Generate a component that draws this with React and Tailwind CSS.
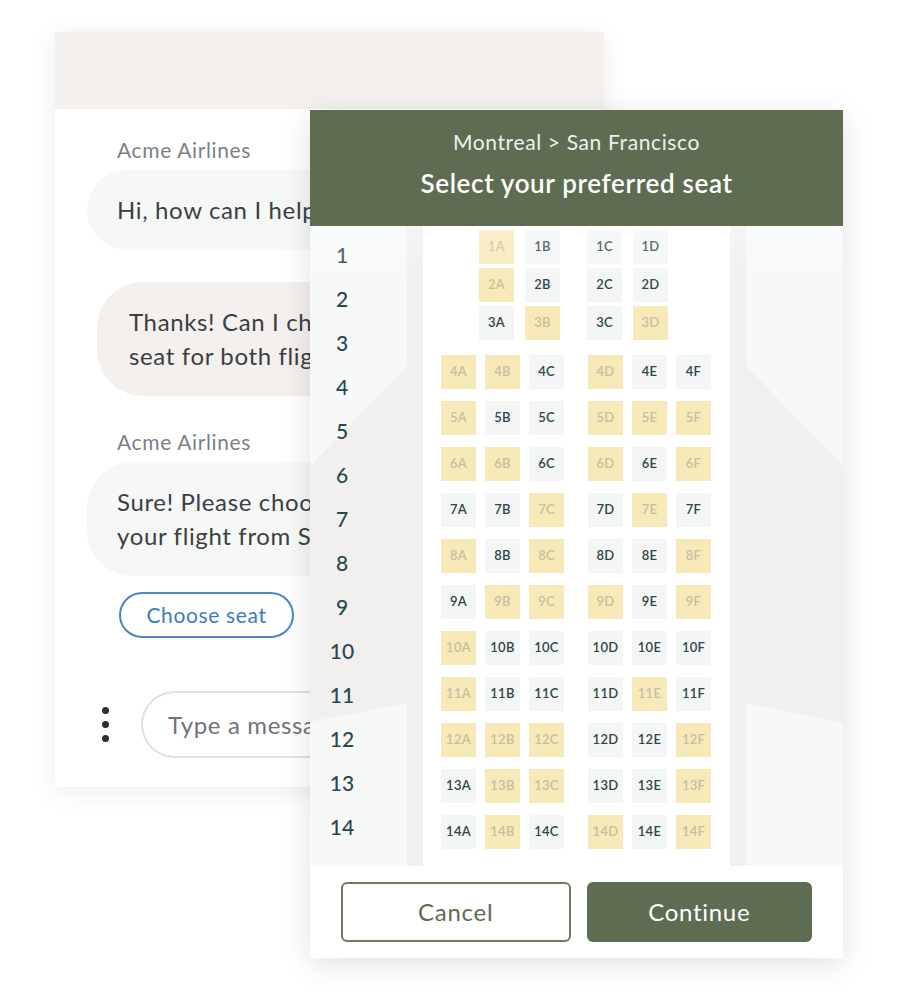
import React from 'react';

const FONT = { fontFamily: 'Lato, "Open Sans", Arial, sans-serif' };

const taken = {
  1: 'A', 2: 'A', 3: 'BD', 4: 'ABD', 5: 'ADEF', 6: 'ABDF', 7: 'CE',
  8: 'ACF', 9: 'BCDF', 10: 'A', 11: 'AE', 12: 'ABCF', 13: 'BCF', 14: 'BDF',
};

function Seat({ row, col }) {
  const isTaken = taken[row].includes(col);
  return (
    <div
      className={`w-[35px] h-[34px] flex items-center justify-center text-[13px] font-semibold tracking-[0.02em] ${
        isTaken ? 'bg-[#f7e9b8] text-[#c6bfa2]' : 'bg-[#f4f6f6] text-[#2f4548]'
      }`}
    >
      {row}{col}
    </div>
  );
}

function SideColumn({ side, children }) {
  const points = side === 'left' ? '97,140 0,240 0,496 97,477' : '0,140 97,240 97,497 0,477';
  return (
    <div className="relative w-[97px] bg-[#f7f8f8]">
      <svg className="absolute inset-0" width="97" height="640" viewBox="0 0 97 640">
        <polygon points={points} fill="#f1f0ee" />
      </svg>
      {children}
    </div>
  );
}

function SeatPanel() {
  const rows = Array.from({ length: 14 }, (_, i) => i + 1);
  return (
    <div className="absolute left-[310px] top-[110px] w-[533px] bg-white shadow-[0_6px_28px_rgba(0,0,0,0.12)]">
      {/* header */}
      <div className="h-[116px] bg-[#5e6d51] flex flex-col items-center pt-[20px]">
        <div className="text-[21px] leading-[24px] tracking-[0.03em] text-[#eef0eb]">Montreal &gt; San Francisco</div>
        <div className="mt-[14px] text-[26px] leading-[30px] font-semibold tracking-[0.025em] text-white">Select your preferred seat</div>
      </div>

      {/* seat map */}
      <div className="relative flex h-[640px]">
        <SideColumn side="left">
          <div className="relative flex flex-col pt-[7px]">
            {rows.map(r => (
              <div key={r} className="w-[64px] h-[44px] leading-[44px] text-center text-[21px] font-medium text-[#2a474d]">{r}</div>
            ))}
          </div>
        </SideColumn>
        <div className="w-[16px] bg-[#f1f0ee]" />
        <div className="w-[307px] bg-white pt-[4px]">
          <div className="flex flex-col gap-[4px] pl-[56px]">
            {[1, 2, 3].map(r => (
              <div key={r} className="flex gap-[27px]">
                <div className="flex gap-[11px]"><Seat row={r} col="A" /><Seat row={r} col="B" /></div>
                <div className="flex gap-[11px]"><Seat row={r} col="C" /><Seat row={r} col="D" /></div>
              </div>
            ))}
          </div>
          <div className="mt-[15px] flex flex-col gap-[12px] pl-[18px]">
            {rows.slice(3).map(r => (
              <div key={r} className="flex gap-[24px]">
                <div className="flex gap-[9px]"><Seat row={r} col="A" /><Seat row={r} col="B" /><Seat row={r} col="C" /></div>
                <div className="flex gap-[9px]"><Seat row={r} col="D" /><Seat row={r} col="E" /><Seat row={r} col="F" /></div>
              </div>
            ))}
          </div>
        </div>
        <div className="w-[16px] bg-[#f1f0ee]" />
        <SideColumn side="right" />
        <div className="pointer-events-none absolute top-0 left-0 right-0 h-[60px] bg-linear-to-b from-white/30 to-transparent" />
      </div>

      {/* actions */}
      <div className="flex gap-[16px] px-[31px] pt-[16px] pb-[16px]">
        <button className="flex-1 h-[60px] rounded-[6px] border-2 border-[#6d7c63] bg-white text-[24px] tracking-[0.03em] text-[#5e6d51]">Cancel</button>
        <button className="flex-1 h-[60px] rounded-[6px] bg-[#5e6d51] text-[24px] tracking-[0.03em] text-white">Continue</button>
      </div>
    </div>
  );
}

function ChatCard() {
  return (
    <div className="w-[549px] h-[755px] bg-white shadow-[0_4px_24px_rgba(0,0,0,0.08)] overflow-hidden tracking-[0.04em]">
      <div className="h-[77px] bg-[#f3f0ee]" />
      <div className="pl-[32px] pt-[29px] flex flex-col items-start">
        <div className="pl-[30px] text-[21px] leading-[24px] text-[#7c8085]">Acme Airlines</div>
        <div className="mt-[8px] w-[224px] overflow-hidden rounded-l-[40px] bg-[#f6f7f7] pl-[30px] py-[23px] text-[24px] leading-[34px] text-[#3a3f44] whitespace-nowrap">
          Hi, how can I help you today?
        </div>
        <div className="mt-[32px] ml-[10px] w-[214px] overflow-hidden rounded-l-[46px] bg-[#f3f0ee] pl-[32px] py-[23px] text-[24px] leading-[34px] text-[#3a3f44] whitespace-nowrap">
          Thanks! Can I choose my<br />seat for both flights?
        </div>
        <div className="mt-[34px] pl-[30px] text-[21px] leading-[24px] text-[#7c8085]">Acme Airlines</div>
        <div className="mt-[8px] w-[224px] overflow-hidden rounded-l-[46px] bg-[#f6f7f7] pl-[30px] py-[23px] text-[24px] leading-[34px] text-[#3a3f44] whitespace-nowrap">
          Sure! Please choose a seat for<br />your flight from San Francisco.
        </div>
        <button className="mt-[16px] ml-[32px] h-[46px] w-[175px] rounded-full border-2 border-[#4a86c5] text-[21px] text-[#3b7cc0]">
          Choose seat
        </button>
        <div className="mt-[53px] flex items-center gap-[18px]">
          <div className="w-[36px] flex flex-col items-center gap-[7px]">
            <span className="w-[7px] h-[7px] rounded-full bg-[#2b2f33]" />
            <span className="w-[7px] h-[7px] rounded-full bg-[#2b2f33]" />
            <span className="w-[7px] h-[7px] rounded-full bg-[#2b2f33]" />
          </div>
          <div className="w-[170px] overflow-hidden whitespace-nowrap h-[67px] rounded-l-full border-2 border-r-0 border-[#dfe1e2] pl-[25px] flex items-center text-[24px] text-[#6f7479]">
            Type a message...
          </div>
        </div>
      </div>
    </div>
  );
}

export default function App() {
  return (
    <div className="relative w-[918px] h-[1000px] bg-white pt-[32px] pl-[55px]" style={FONT}>
      <ChatCard />
      <SeatPanel />
    </div>
  );
}
